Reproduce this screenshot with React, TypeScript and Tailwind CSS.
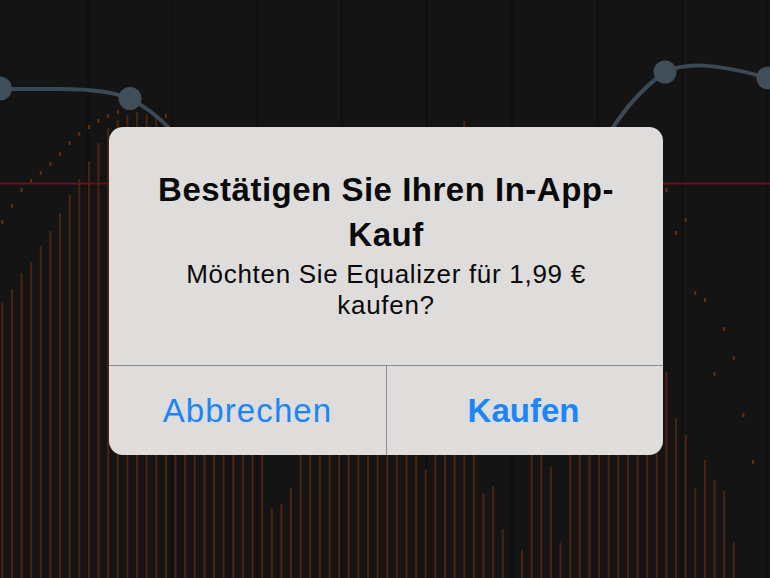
import React from "react";

// Equalizer spectrum: top y of each bar (578 = no bar) and optional peak marker y
const BAR_TOPS: number[] = [
  302, 289, 273, 262, 246, 231, 213, 195, 179, 161,
  143, 128, 120, 115, 112, 114, 118, 125, 200, 200,
  200, 200, 200, 200, 200, 200, 200, 200, 508, 504,
  488, 200, 200, 200, 200, 200, 200, 200, 200, 200,
  200, 200, 200, 200, 470, 200, 200, 200, 121, 200,
  493, 486, 529, 578, 550, 200, 200, 467, 543, 200,
  200, 200, 200, 200, 200, 200, 200, 200, 200, 372,
  418, 435, 488, 460, 480, 491, 542, 578, 578, 578,
];

const PEAKS: Record<number, number> = {
  0: 222, 1: 206, 2: 190, 3: 181, 4: 173, 5: 164, 6: 154, 7: 143, 8: 134, 9: 127,
  10: 121, 11: 116, 12: 112, 17: 116,
  69: 190, 70: 233, 71: 220, 72: 293, 73: 300, 74: 374, 75: 329, 76: 358, 77: 415, 78: 462,
};

const GRID_X = [88, 172, 257, 342, 427, 512, 598, 682, 767];

function EqualizerBackdrop() {
  const pitch = 9.625;
  return (
    <svg
      className="absolute inset-0"
      width={770}
      height={578}
      viewBox="0 0 770 578"
    >
      <rect x={0} y={0} width={770} height={578} fill="#141414" />
      {GRID_X.map((x) => (
        <rect key={x} x={x - 1} y={0} width={2} height={578} fill="#0b0b0b" opacity={0.6} />
      ))}
      {BAR_TOPS.map((top, i) => {
        const x = 1.3 + pitch * i;
        return top < 578 ? (
          <rect key={`b${i}`} x={x} y={top} width={2} height={578 - top} fill="#4b240f" />
        ) : null;
      })}
      {Object.entries(PEAKS).map(([k, y]) => {
        const x = 1.3 + pitch * Number(k);
        return <rect key={`p${k}`} x={x} y={y - 2} width={2} height={4} fill="#5f2e12" />;
      })}
      <rect x={0} y={182.5} width={770} height={2} fill="#621317" />
      {/* filter response curve */}
      <path
        d="M -20 89 L 60 89 C 95 89 115 92 130 99 C 145 106 158 116 172 131 L 205 170"
        fill="none"
        stroke="#3a4953"
        strokeWidth={4}
        strokeLinecap="round"
      />
      <path
        d="M 595 160 C 605 140 625 100 665 72 C 685 62 715 63 768 78 L 800 88"
        fill="none"
        stroke="#3a4953"
        strokeWidth={4}
        strokeLinecap="round"
      />
      <circle cx={0} cy={88.5} r={12} fill="#3f4e58" />
      <circle cx={130} cy={98.5} r={11.5} fill="#3f4e58" />
      <circle cx={665} cy={72} r={11.5} fill="#3f4e58" />
      <circle cx={768} cy={78} r={11.5} fill="#3f4e58" />
    </svg>
  );
}

export default function App() {
  return (
    <div
      className="relative w-[770px] h-[578px] overflow-hidden bg-[#141414]"
      style={{ fontFamily: '"Liberation Sans", Arial, Helvetica, sans-serif' }}
    >
      <EqualizerBackdrop />
      <div className="relative flex h-full w-full items-center justify-center pt-[4px] pl-[2px]">
        <div className="flex h-[328px] w-[554px] flex-col overflow-hidden rounded-[14px] bg-[#dedddc]">
          <div className="flex h-[238px] flex-col items-center pt-[40px] text-center text-[#0a0a0a]">
            <div className="text-[33px] font-bold leading-[45px] tracking-[0.5px]">
              Bestätigen Sie Ihren In-App-
              <br />
              Kauf
            </div>
            <div className="mt-[2px] text-[26px] leading-[31px] tracking-[0.7px]">
              Möchten Sie Equalizer für 1,99 €
              <br />
              kaufen?
            </div>
          </div>
          <div className="flex h-[90px] border-t border-[#8e8d8d]">
            <div className="flex w-[278px] items-center justify-center border-r border-[#8e8d8d] text-[33px] leading-[33px] tracking-[1.1px] text-[#1a86f9]">
              Abbrechen
            </div>
            <div className="flex flex-1 items-center justify-center pr-[3px] text-[33px] font-bold leading-[33px] text-[#1a86f9]">
              Kaufen
            </div>
          </div>
        </div>
      </div>
    </div>
  );
}
